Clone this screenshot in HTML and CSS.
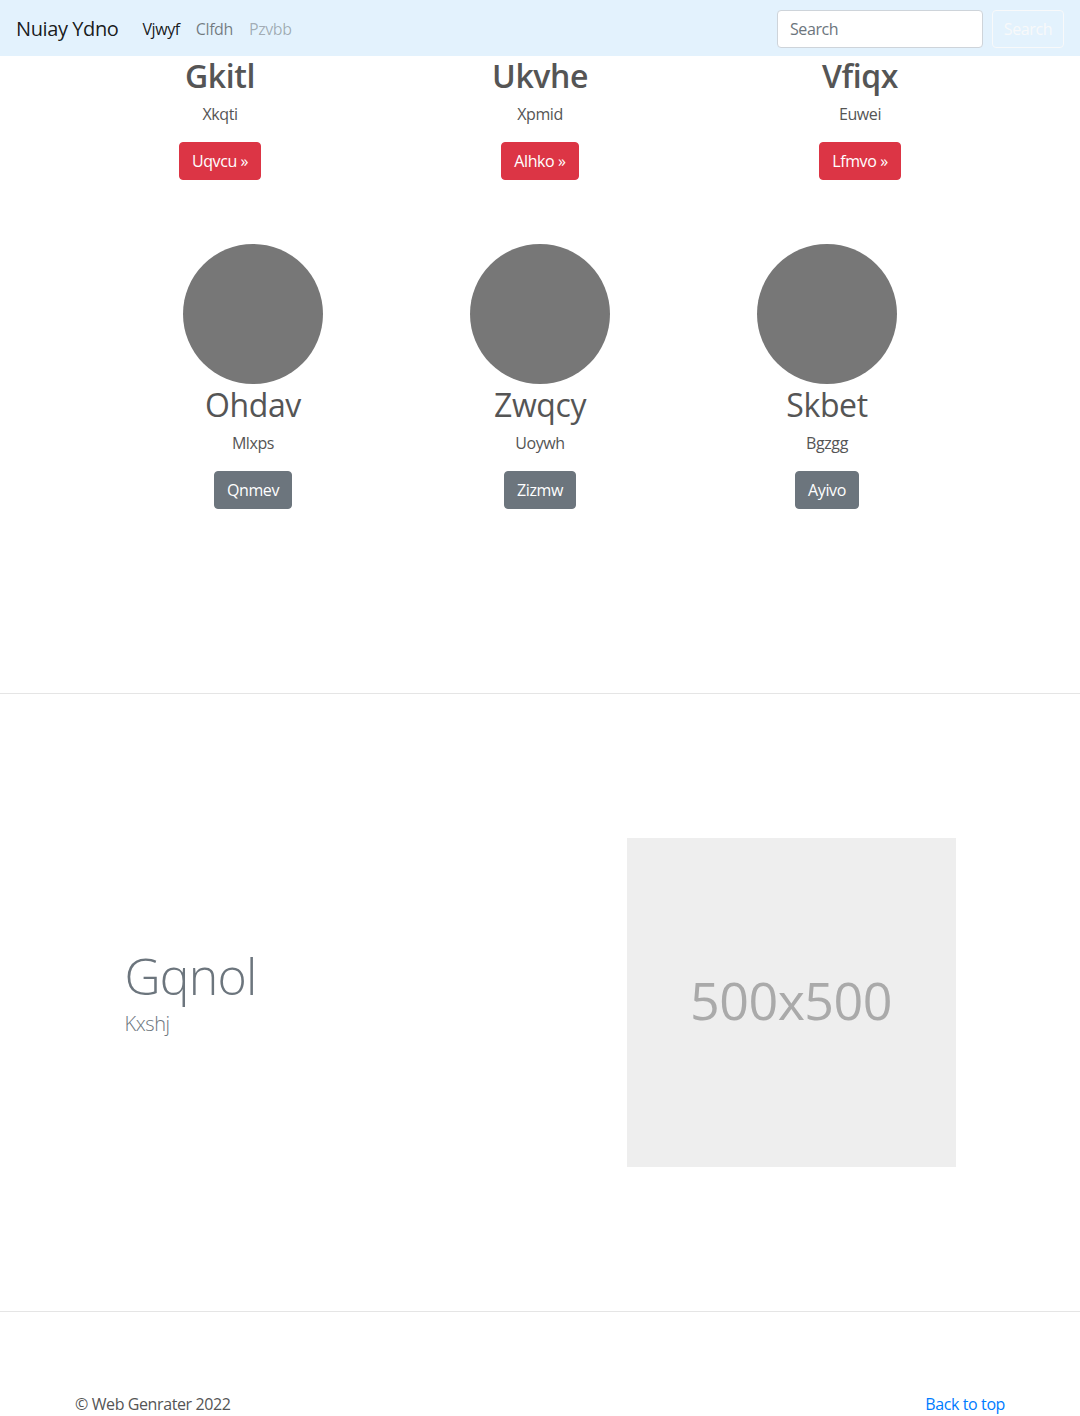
FILE: index.html
```html
<!DOCTYPE html>
<html lang="en">
<head>
<meta charset="utf-8">
<title>Nuiay Ydno</title>
<link rel="stylesheet" href="styles.css">
</head>
<body>
<header class="navbar">
  <div class="nav-left">
    <a class="brand" href="#">Nuiay Ydno</a>
    <nav class="nav-links">
      <a class="nav-link active" href="#">Vjwyf</a>
      <a class="nav-link" href="#">Clfdh</a>
      <a class="nav-link disabled" href="#">Pzvbb</a>
    </nav>
  </div>
  <form class="search-form">
    <input class="search-input" type="text" placeholder="Search">
    <button class="btn btn-outline-light" type="button">Search</button>
  </form>
</header>

<main>
  <section class="container top-cols">
    <div class="col">
      <h2 class="title-bold">Gkitl</h2>
      <p>Xkqti</p>
      <a class="btn btn-danger" href="#">Uqvcu &raquo;</a>
    </div>
    <div class="col">
      <h2 class="title-bold">Ukvhe</h2>
      <p>Xpmid</p>
      <a class="btn btn-danger" href="#">Alhko &raquo;</a>
    </div>
    <div class="col">
      <h2 class="title-bold">Vfiqx</h2>
      <p>Euwei</p>
      <a class="btn btn-danger" href="#">Lfmvo &raquo;</a>
    </div>
  </section>

  <section class="narrow marketing">
    <div class="col">
      <div class="circle"></div>
      <h2 class="title">Ohdav</h2>
      <p>Mlxps</p>
      <a class="btn btn-secondary" href="#">Qnmev</a>
    </div>
    <div class="col">
      <div class="circle"></div>
      <h2 class="title">Zwqcy</h2>
      <p>Uoywh</p>
      <a class="btn btn-secondary" href="#">Zizmw</a>
    </div>
    <div class="col">
      <div class="circle"></div>
      <h2 class="title">Skbet</h2>
      <p>Bgzgg</p>
      <a class="btn btn-secondary" href="#">Ayivo</a>
    </div>
  </section>

  <hr class="divider divider-first">

  <section class="narrow featurette">
    <div class="feat-text">
      <h2 class="feat-heading">Gqnol</h2>
      <p class="lead">Kxshj</p>
    </div>
    <div class="feat-image">
      <div class="placeholder">500x500</div>
    </div>
  </section>

  <hr class="divider">
</main>

<footer class="container footer">
  <p>&copy; Web Genrater 2022</p>
  <p><a href="#" class="link">Back to top</a></p>
</footer>
</body>
</html>
```

FILE: styles.css
```css
* { box-sizing: border-box; }
html, body { margin: 0; padding: 0; }
body {
  font-family: "Open Sans", "Liberation Sans", sans-serif;
  font-size: 16px;
  line-height: 1.5;
  letter-spacing: -0.025em;
  color: #555;
  background: #fff;
  width: 1080px;
  height: 1416px;
  overflow: hidden;
}
a { text-decoration: none; }
p { margin: 0 0 16px; }
h2 { margin: 0 0 8px; font-size: 32px; line-height: 1.2; font-weight: 400; }

/* navbar */
.navbar {
  height: 56px;
  background: #e3f2fd;
  padding: 9px 16px 7px;
  display: flex;
  align-items: center;
  justify-content: space-between;
}
.nav-left { display: flex; align-items: center; }
.brand {
  font-size: 20px;
  line-height: 30px;
  color: rgba(0,0,0,.9);
  margin-right: 16px;
  padding: 5px 0;
}
.nav-links { display: flex; }
.nav-link { padding: 8px; line-height: 24px; color: rgba(0,0,0,.5); }
.nav-link.active { color: rgba(0,0,0,.9); }
.nav-link.disabled { color: rgba(0,0,0,.3); }
.search-form { display: flex; align-items: center; }
.search-input {
  width: 206px;
  height: 38px;
  padding: 6px 12px;
  font: inherit;
  font-size: 16px;
  letter-spacing: -0.025em;
  color: #495057;
  border: 1px solid #ced4da;
  border-radius: 4px;
  background: #fff;
  margin-right: 9px;
  outline: none;
}
.search-input::placeholder { color: #6c757d; }

/* buttons */
.btn {
  display: inline-block;
  height: 38px;
  padding: 6px 12px;
  font-size: 16px;
  line-height: 24px;
  border: 1px solid transparent;
  border-radius: 4px;
  font-family: inherit;
  letter-spacing: -0.025em;
}
.btn-outline-light {
  background: transparent;
  color: #f8f9fa;
  border-color: #f8f9fa;
  width: 72px;
  padding: 6px 0;
  text-align: center;
}
.btn-danger { background: #dc3545; border-color: #dc3545; color: #fff; }
.btn-secondary { background: #6c757d; border-color: #6c757d; color: #fff; }

/* top columns */
.container {
  width: 960px;
  margin: 0 auto;
  padding: 0 15px;
}
.top-cols {
  display: grid;
  grid-template-columns: repeat(3, 1fr);
  width: 960px;
  padding: 0;
}
.col { text-align: center; padding: 0 15px; }
.title-bold { font-weight: 600; color: #555; padding-top: 1px; margin-bottom: 7px; }
.title { color: #555; }

/* marketing */
.narrow {
  width: 861px;
  margin: 0 auto;
}
.marketing {
  display: grid;
  grid-template-columns: repeat(3, 1fr);
  padding-top: 64px;
}
.marketing .col { margin-bottom: 24px; }
.circle {
  width: 140px;
  height: 140px;
  border-radius: 50%;
  background: #777;
  margin: 0 auto 2px;
}
.marketing .title { margin-bottom: 6px; }

/* dividers */
.divider {
  margin: 0;
  border: 0;
  border-top: 1px solid rgba(0,0,0,.1);
}
.divider-first { margin-top: 160px; }

/* featurette */
.featurette {
  display: grid;
  grid-template-columns: 7fr 5fr;
  align-items: center;
  padding: 144px 0 144px;
}
.feat-text { padding: 0 15px 14px; }
.feat-heading {
  font-size: 50px;
  line-height: 1;
  font-weight: 300;
  letter-spacing: -0.8px;
  color: #6c757d;
  margin: 0 0 8px;
}
.lead {
  font-size: 20px;
  font-weight: 300;
  color: #6c757d;
  margin: 0;
}
.feat-image { padding: 0 15px; }
.placeholder {
  width: 329px;
  height: 329px;
  background: #eee;
  color: #aaa;
  font-size: 52px;
  letter-spacing: -0.01em;
  display: flex;
  align-items: center;
  justify-content: center;
  padding-bottom: 4px;
}

/* footer */
.footer {
  display: flex;
  justify-content: space-between;
  padding-top: 80px;
}
.footer p { margin: 0; }
.link { color: #007bff; }
```
